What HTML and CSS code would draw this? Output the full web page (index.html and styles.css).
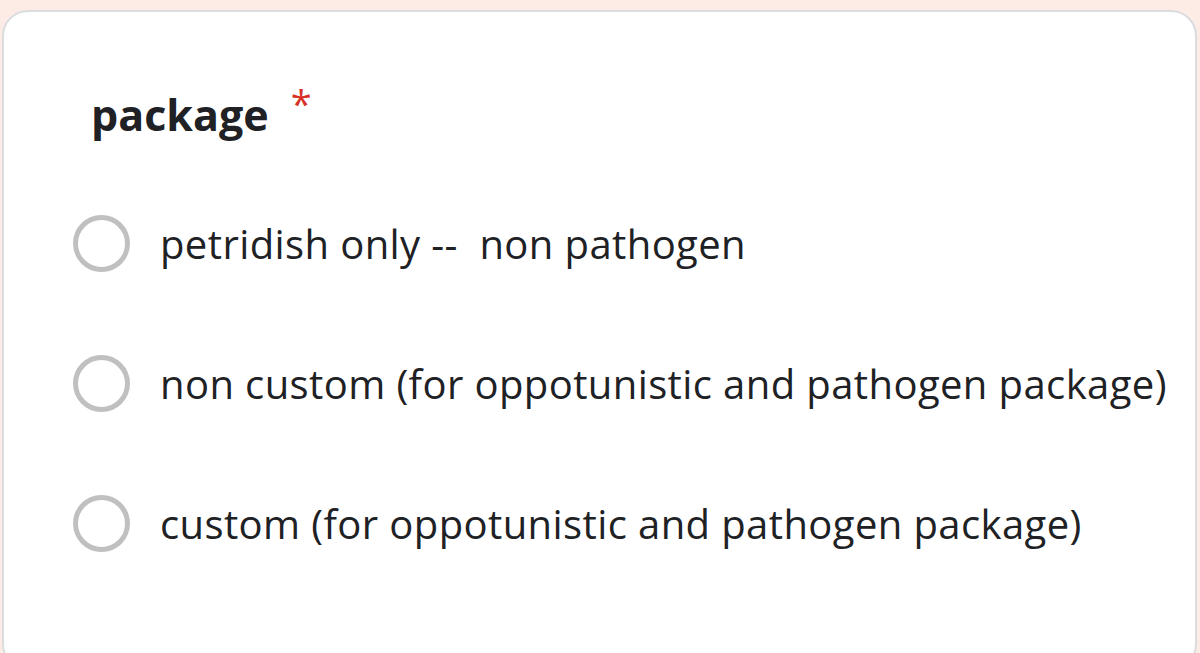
FILE: index.html
```html
<!DOCTYPE html>
<html>
<head>
    <title>package</title>
    <link rel="stylesheet" href="styles.css">
</head>
<body>
    <div class="card">
        <div class="question">
            <span class="title">package</span>
            <span class="required">*</span>
        </div>
        <div class="options">
            <label class="option">
                <span class="radio"></span>
                <span class="text">petridish only --&nbsp; non pathogen</span>
            </label>
            <label class="option">
                <span class="radio"></span>
                <span class="text">non custom (for oppotunistic and pathogen package)</span>
            </label>
            <label class="option">
                <span class="radio"></span>
                <span class="text">custom (for oppotunistic and pathogen package)</span>
            </label>
        </div>
    </div>
</body>
</html>
```

FILE: styles.css
```css
body {
    margin: 0;
    padding: 10px 3px 0 2px;
    background-color: #fdece6;
    font-family: "Open Sans", Arial, sans-serif;
    color: #202124;
    height: 653px;
    box-sizing: border-box;
    overflow: hidden;
}
.card {
    background-color: #fff;
    border: 2px solid #dadce0;
    border-radius: 26px;
    height: 660px;
    padding: 73px 0 0 69px;
    box-sizing: border-box;
}
.question {
    display: flex;
    align-items: flex-start;
    margin-left: 18px;
}
.title {
    font-size: 43px;
    font-weight: 700;
    line-height: 60px;
}
.required {
    color: #d93025;
    font-size: 38px;
    margin-left: 22px;
    line-height: 36px;
}
.options {
    margin-top: 28px;
}
.option {
    display: flex;
    align-items: center;
    height: 140px;
}
.radio {
    width: 47px;
    height: 47px;
    border: 5px solid #c0c0c0;
    border-radius: 50%;
    flex-shrink: 0;
}
.text {
    font-size: 40px;
    letter-spacing: 0.4px;
    margin-left: 30px;
}
```
